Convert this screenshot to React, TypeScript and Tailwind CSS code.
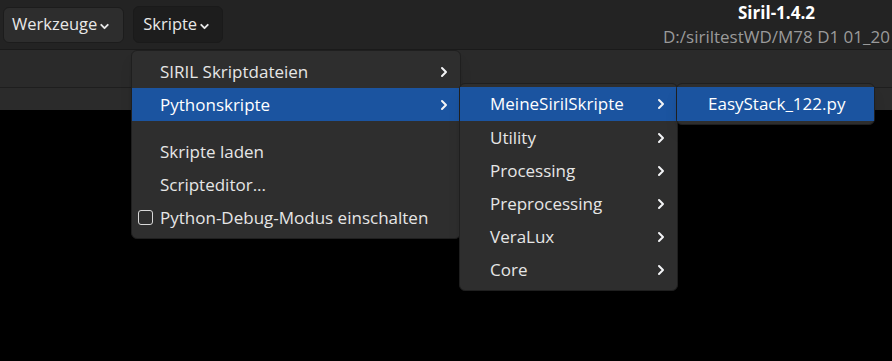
import { ChevronDown, ChevronRight } from "lucide-react";

const font = { fontFamily: '"Open Sans", "Noto Sans", sans-serif' };

function Arrow() {
  return <ChevronRight className="h-4 w-4 text-gray-100" strokeWidth={3} />;
}

export default function App() {
  const sub = ["Utility", "Processing", "Preprocessing", "VeraLux", "Core"];

  return (
    <div className="relative h-[361px] w-[892px] overflow-hidden bg-black text-[17px]" style={font}>
      {/* header bar */}
      <div className="flex h-[50px] items-center border-b border-[#1a1a1a] bg-[#232323] pl-[3px]">
        <button className="flex h-[36px] items-center rounded-md border border-[#1c1c1c] bg-[#2d2d2d] pl-[8px] pr-[12px] text-[16.5px] text-[#e8e8e8]">
          Werkzeuge
          <ChevronDown className="ml-[1px] mt-[3px] h-[13px] w-[13px]" strokeWidth={3.5} />
        </button>
        <button className="ml-[9px] flex h-[37px] items-center rounded-md border border-[#1a1a1a] bg-[#1d1d1d] pl-[9px] pr-[11px] text-[16.5px] text-[#e8e8e8]">
          Skripte
          <ChevronDown className="ml-[1px] mt-[3px] h-[13px] w-[13px]" strokeWidth={3.5} />
        </button>
        <div className="ml-auto flex w-[229px] flex-col self-stretch pt-[1px]">
          <div className="pl-[75px] font-bold leading-[24px] text-white">Siril-1.4.2</div>
          <div className="whitespace-nowrap leading-[24px] text-[#9a9a9a]">D:/siriltestWD/M78 D1 01_20</div>
        </div>
      </div>
      {/* toolbar */}
      <div className="h-[38px] border-b border-[#1e1e1e] bg-[#2a2a2a]" />
      <div className="h-[22px] bg-[#2b2b2b]" />

      {/* main menu */}
      <div className="absolute left-[131px] top-[50px] w-[330px] rounded-md border border-[#1f1f1f] bg-[#2e2e2e] pb-[4px] pt-[4px] text-[#e6e6e6] shadow-lg">
        <div className="flex h-[33px] items-center justify-between pl-[28px] pr-[8px]">
          SIRIL Skriptdateien
          <Arrow />
        </div>
        <div className="flex h-[33px] items-center justify-between bg-[#1b54a0] pl-[28px] pr-[8px] text-white">
          Pythonskripte
          <Arrow />
        </div>
        <div className="h-[14px]" />
        <div className="flex h-[33px] items-center pl-[28px]">Skripte laden</div>
        <div className="flex h-[33px] items-center pl-[28px]">Scripteditor...</div>
        <div className="flex h-[33px] items-center pl-[6px]">
          <span className="mr-[7px] h-[15px] w-[15px] rounded-[3px] border border-[#d8d8d8]" />
          Python-Debug-Modus einschalten
        </div>
      </div>

      {/* submenu */}
      <div className="absolute left-[459px] top-[83px] w-[219px] rounded-md border border-[#1f1f1f] bg-[#2e2e2e] pb-[4px] pt-[3px] text-[#e6e6e6] shadow-lg">
        <div className="flex h-[34px] items-center justify-between bg-[#1b54a0] pl-[30px] pr-[8px] text-white">
          MeineSirilSkripte
          <Arrow />
        </div>
        {sub.map((s) => (
          <div key={s} className="flex h-[33px] items-center justify-between pl-[30px] pr-[8px]">
            {s}
            <Arrow />
          </div>
        ))}
      </div>

      {/* third menu */}
      <div className="absolute left-[676px] top-[83px] w-[199px] rounded-md border border-[#1f1f1f] bg-[#2e2e2e] pb-[3px] pt-[3px] text-white shadow-lg">
        <div className="flex h-[34px] items-center bg-[#1b54a0] pl-[31px]">EasyStack_122.py</div>
      </div>
    </div>
  );
}
